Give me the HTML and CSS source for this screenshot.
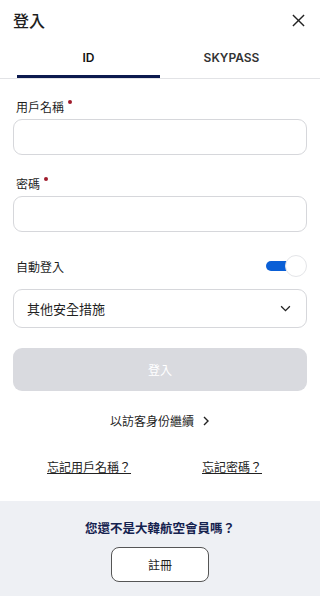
FILE: index.html
```html
<!DOCTYPE html>
<html lang="zh-TW">
<head>
    <meta charset="UTF-8">
    <meta name="viewport" content="width=device-width, initial-scale=1.0">
    <title>登入</title>
    <link rel="stylesheet" href="styles.css">
</head>
<body>
    <div class="header">
        <h1 class="title">登入</h1>
        <button class="close" aria-label="close">
            <svg width="13" height="13" viewBox="0 0 14 14"><path d="M1 1L13 13M13 1L1 13" stroke="#222" stroke-width="1.5" fill="none"/></svg>
        </button>
    </div>
    <div class="tabs">
        <div class="tab active">ID</div>
        <div class="tab">SKYPASS</div>
    </div>
    <form class="form">
        <label class="label">用戶名稱<span class="req"></span></label>
        <div class="input"></div>
        <label class="label">密碼<span class="req"></span></label>
        <div class="input"></div>
        <div class="auto-row">
            <span>自動登入</span>
            <div class="toggle"><span class="track"></span><span class="thumb"></span></div>
        </div>
        <div class="select">
            <span>其他安全措施</span>
            <svg width="11" height="7" viewBox="0 0 12 8"><path d="M1 1.5L6 6.5L11 1.5" stroke="#222" stroke-width="1.5" fill="none"/></svg>
        </div>
        <div class="submit">登入</div>
    </form>
    <div class="guest">以訪客身份繼續<svg width="8" height="10" viewBox="0 0 8 10"><path d="M2 1L6 5L2 9" stroke="#222" stroke-width="1.4" fill="none"/></svg></div>
    <div class="links">
        <a href="#">忘記用戶名稱？</a>
        <a href="#">忘記密碼？</a>
    </div>
    <div class="footer">
        <p class="join-text">您還不是大韓航空會員嗎？</p>
        <div class="join-btn">註冊</div>
    </div>
</body>
</html>
```
FILE: styles.css
```css
body {
    margin: 0;
    width: 320px;
    height: 596px;
    background: #fff;
    font-family: "Noto Sans CJK TC", "Liberation Sans", sans-serif;
    color: #1f1f1f;
    display: flex;
    flex-direction: column;
    overflow: hidden;
}
.header {
    display: flex;
    justify-content: space-between;
    align-items: center;
    height: 40px;
    padding: 0 15px 0 13px;
}
.title {
    margin: 0;
    font-size: 16px;
    font-weight: 500;
}
.close {
    border: none;
    background: none;
    padding: 0;
    display: flex;
}
.tabs {
    display: flex;
    border-bottom: 1px solid #e2e3e6;
    padding: 0 0 0 17px;
    height: 38px;
}
.tab {
    width: 143px;
    text-align: center;
    font-family: "Inter", "Liberation Sans", sans-serif;
    font-size: 12px;
    font-weight: 600;
    color: #333;
    line-height: 36px;
}
.tab + .tab {
    flex: 1;
    padding-right: 17px;
}
.tab.active {
    color: #111;
    border-bottom: 3px solid #0c1a4e;
    line-height: 35px;
}
.form {
    display: flex;
    flex-direction: column;
    padding: 0 13px;
}
.label {
    font-size: 12px;
    margin: 19px 0 4px 3px;
    line-height: 17px;
    display: flex;
}
.req {
    width: 4px;
    height: 4px;
    border-radius: 50%;
    background: #a01c2c;
    margin: 2px 0 0 4px;
}
.input {
    height: 34px;
    border: 1px solid #d6d7db;
    border-radius: 9px;
}
.input + .label {
    margin-top: 20px;
}
.auto-row {
    display: flex;
    justify-content: space-between;
    align-items: center;
    margin-top: 23px;
    font-size: 12px;
    padding-left: 3px;
}
.toggle {
    position: relative;
    width: 41px;
    height: 22px;
}
.track {
    position: absolute;
    left: 0;
    top: 6px;
    width: 26px;
    height: 10px;
    border-radius: 5px;
    background: #0a5fd6;
}
.thumb {
    position: absolute;
    right: 0;
    top: 0;
    width: 20px;
    height: 20px;
    border-radius: 50%;
    background: #fff;
    border: 1px solid #e4e5e8;
}
.select {
    display: flex;
    justify-content: space-between;
    align-items: center;
    height: 37px;
    margin-top: 12px;
    padding: 0 15px 0 13px;
    border: 1px solid #d6d7db;
    border-radius: 9px;
    font-size: 13px;
}
.submit {
    margin-top: 20px;
    height: 43px;
    border-radius: 9px;
    background: #d9dadf;
    color: #fff;
    font-size: 12px;
    display: flex;
    align-items: center;
    justify-content: center;
}
.guest {
    display: flex;
    justify-content: center;
    align-items: center;
    gap: 8px;
    margin-top: 21px;
    font-size: 12px;
    line-height: 18px;
}
.links {
    display: flex;
    justify-content: space-between;
    padding: 0 58px 0 47px;
    margin-top: 28px;
}
.links a {
    color: #222;
    font-size: 12px;
    line-height: 18px;
    text-decoration: underline;
}
.footer {
    margin-top: auto;
    height: 95px;
    background: #eef0f4;
    display: flex;
    flex-direction: column;
    align-items: center;
}
.join-text {
    margin: 18px 0 0;
    font-size: 12.5px;
    font-weight: 700;
    color: #15224f;
    line-height: 18px;
}
.join-btn {
    margin-top: 10px;
    width: 96px;
    height: 33px;
    border: 1px solid #555;
    border-radius: 8px;
    background: #fff;
    font-size: 12px;
    display: flex;
    align-items: center;
    justify-content: center;
}
```
